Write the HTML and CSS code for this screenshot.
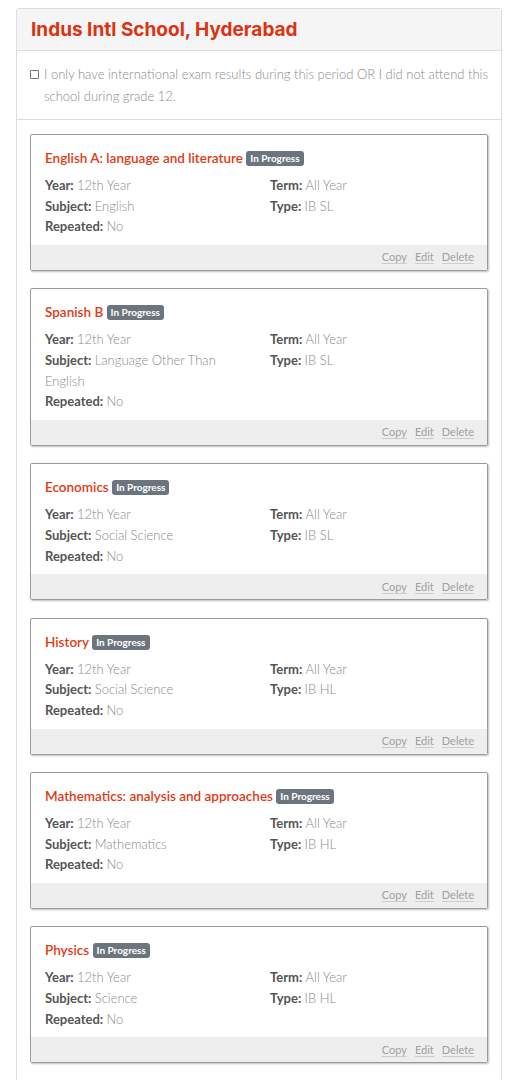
FILE: index.html
```html
<!DOCTYPE html>
<html lang="en">
<head>
  <meta charset="UTF-8">
  <meta name="viewport" content="width=device-width, initial-scale=1.0">
  <title>Courses</title>
  <link rel="stylesheet" href="styles.css">
</head>
<body>
  <div class="panel">
    <div class="panel-heading">
      <h1>Indus Intl School, Hyderabad</h1>
    </div>

    <div class="panel-check">
      <label class="check">
        <span class="box"></span>
        <span>I only have international exam results during this period OR I did not attend this school during grade 12.</span>
      </label>
    </div>

    <div class="courses">
      <div class="course">
        <div class="course-body">
          <h3>English A: language and literature <span class="badge">In Progress</span></h3>
          <div class="details">
            <p><b>Year:</b> <span>12th Year</span></p>
            <p><b>Term:</b> <span>All Year</span></p>
            <p><b>Subject:</b> <span>English</span></p>
            <p><b>Type:</b> <span>IB SL</span></p>
            <p><b>Repeated:</b> <span>No</span></p>
          </div>
        </div>
        <div class="course-footer"><a href="#">Copy</a><a href="#">Edit</a><a href="#">Delete</a></div>
      </div>

      <div class="course">
        <div class="course-body">
          <h3>Spanish B <span class="badge">In Progress</span></h3>
          <div class="details">
            <p><b>Year:</b> <span>12th Year</span></p>
            <p><b>Term:</b> <span>All Year</span></p>
            <p><b>Subject:</b> <span>Language Other Than English</span></p>
            <p><b>Type:</b> <span>IB SL</span></p>
            <p><b>Repeated:</b> <span>No</span></p>
          </div>
        </div>
        <div class="course-footer"><a href="#">Copy</a><a href="#">Edit</a><a href="#">Delete</a></div>
      </div>

      <div class="course">
        <div class="course-body">
          <h3>Economics <span class="badge">In Progress</span></h3>
          <div class="details">
            <p><b>Year:</b> <span>12th Year</span></p>
            <p><b>Term:</b> <span>All Year</span></p>
            <p><b>Subject:</b> <span>Social Science</span></p>
            <p><b>Type:</b> <span>IB SL</span></p>
            <p><b>Repeated:</b> <span>No</span></p>
          </div>
        </div>
        <div class="course-footer"><a href="#">Copy</a><a href="#">Edit</a><a href="#">Delete</a></div>
      </div>

      <div class="course">
        <div class="course-body">
          <h3>History <span class="badge">In Progress</span></h3>
          <div class="details">
            <p><b>Year:</b> <span>12th Year</span></p>
            <p><b>Term:</b> <span>All Year</span></p>
            <p><b>Subject:</b> <span>Social Science</span></p>
            <p><b>Type:</b> <span>IB HL</span></p>
            <p><b>Repeated:</b> <span>No</span></p>
          </div>
        </div>
        <div class="course-footer"><a href="#">Copy</a><a href="#">Edit</a><a href="#">Delete</a></div>
      </div>

      <div class="course">
        <div class="course-body">
          <h3>Mathematics: analysis and approaches <span class="badge">In Progress</span></h3>
          <div class="details">
            <p><b>Year:</b> <span>12th Year</span></p>
            <p><b>Term:</b> <span>All Year</span></p>
            <p><b>Subject:</b> <span>Mathematics</span></p>
            <p><b>Type:</b> <span>IB HL</span></p>
            <p><b>Repeated:</b> <span>No</span></p>
          </div>
        </div>
        <div class="course-footer"><a href="#">Copy</a><a href="#">Edit</a><a href="#">Delete</a></div>
      </div>

      <div class="course">
        <div class="course-body">
          <h3>Physics <span class="badge">In Progress</span></h3>
          <div class="details">
            <p><b>Year:</b> <span>12th Year</span></p>
            <p><b>Term:</b> <span>All Year</span></p>
            <p><b>Subject:</b> <span>Science</span></p>
            <p><b>Type:</b> <span>IB HL</span></p>
            <p><b>Repeated:</b> <span>No</span></p>
          </div>
        </div>
        <div class="course-footer"><a href="#">Copy</a><a href="#">Edit</a><a href="#">Delete</a></div>
      </div>
    </div>
  </div>
</body>
</html>
```

FILE: styles.css
```css
body {
    margin: 0;
    padding: 8px 18px 0 16px;
    background: #fff;
    font-family: 'Lato', 'Open Sans', sans-serif;
    font-size: 13px;
    color: #555;
}

.panel {
    border: 1px solid #ddd;
    border-bottom: none;
    border-radius: 3px 3px 0 0;
}

.panel-heading {
    background: #f5f5f5;
    border-bottom: 1px solid #ddd;
    padding: 0 14px;
    height: 41px;
    display: flex;
    align-items: center;
}

.panel-heading h1 {
    margin: 0;
    font-family: 'Inter', 'Open Sans', sans-serif;
    font-size: 19px;
    font-weight: 700;
    color: #dc3212;
}

.panel-check {
    padding: 12px 8px 12px 13px;
    border-bottom: 1px solid #ddd;
}

.check {
    display: flex;
    gap: 5px;
    line-height: 22px;
    color: #8a8a8a;
    font-weight: 300;
}

.check .box {
    flex: none;
    width: 7px;
    height: 7px;
    margin-top: 7px;
    border: 1px solid #777;
    border-radius: 1px;
}

.courses {
    padding: 14px 13px 20px;
    display: flex;
    flex-direction: column;
    gap: 17.6px;
}

.course {
    border: 1px solid #9a9a9a;
    border-radius: 2px;
    box-shadow: 1px 1px 2px rgba(0,0,0,0.25);
}

.course-body {
    padding: 13px 14px 8px;
}

.course h3 {
    margin: 0 0 7px;
    font-size: 13.5px;
    font-weight: 600;
    line-height: 20px;
    color: #e03a14;
}

.badge {
    display: inline-block;
    background: #6c757d;
    color: #fff;
    font-size: 10px;
    font-weight: 700;
    line-height: 15px;
    padding: 0 4px;
    border-radius: 3px;
    vertical-align: 1px;
}

.details {
    display: grid;
    grid-template-columns: 210px 1fr;
    column-gap: 15px;
    line-height: 20.6px;
}

.details p {
    margin: 0;
}

.details b {
    font-weight: 700;
    color: #555;
}

.details span {
    font-weight: 300;
    color: #8a8a8a;
}

.course-footer {
    background: #eee;
    height: 25px;
    padding: 0 13px;
    display: flex;
    justify-content: flex-end;
    align-items: center;
    gap: 8px;
}

.course-footer a {
    font-size: 11px;
    color: #a0a0a0;
    text-decoration: none;
    border-bottom: 1px solid #ccc;
    line-height: 13px;
}
```
